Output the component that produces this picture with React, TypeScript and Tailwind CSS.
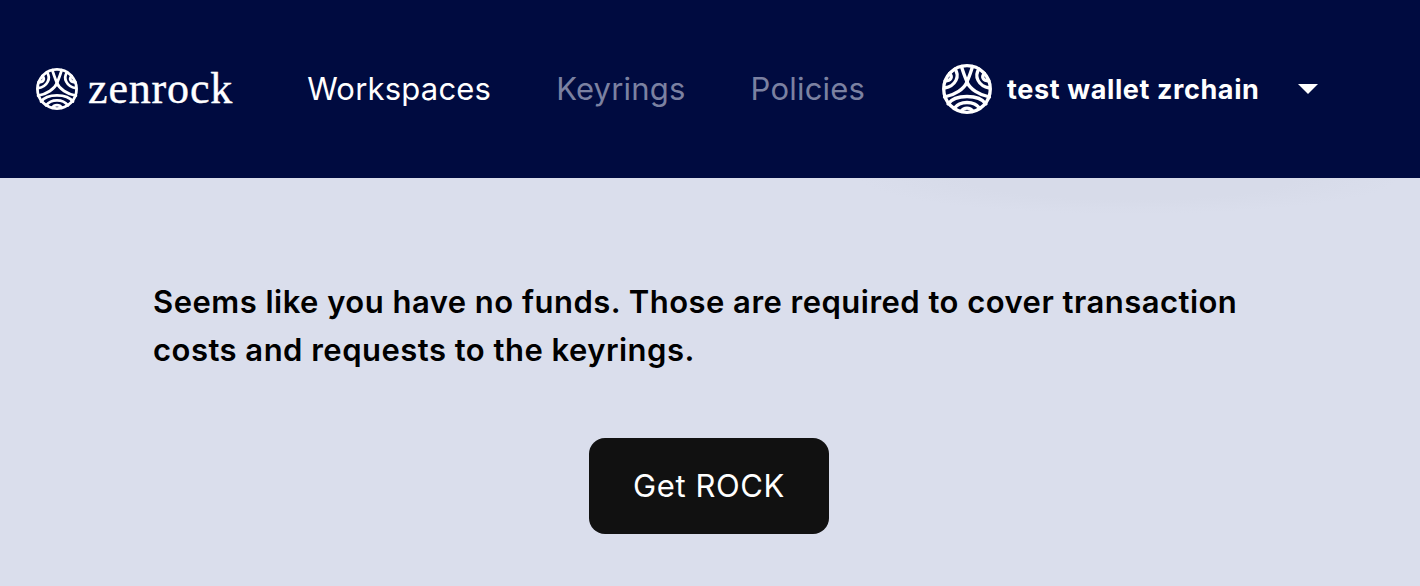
import React from "react";

const LogoMark = ({ className }: { className: string }) => (
  <svg viewBox="0 0 50 50" className={className} fill="none">
    <g stroke="#fff" strokeWidth="3.3" strokeLinecap="round">
      <circle cx="25" cy="25" r="23.300" />
      <path d="M19.500 2.500 C21 8 23 13 25 18 C27 13 29 8 30.500 2.500" />
      <path d="M25 18 C22 25 13 31 2.500 33" />
      <path d="M25 18 C28 25 37 31 47.500 33" />
      <path d="M13 5 C18 12 14 22 2.500 24" />
      <path d="M7.500 9.500 C11 13 9 17 3 17" />
      <path d="M37 5 C32 12 36 22 47.500 24" />
      <path d="M42.500 9.500 C39 13 41 17 47 17" />
      <path d="M6 40 C13 30 37 30 44 40" />
      <path d="M12 44.500 C18 36.500 32 36.500 38 44.500" />
      <path d="M19 47.500 C22 43 28 43 31 47.500" />
    </g>
  </svg>
);

export default function App() {
  return (
    <div className="min-h-[586px] bg-[#dadeec] font-['Inter',sans-serif]">
      <header className="flex h-[178px] items-center bg-[#000b40] pl-[36px]">
        <LogoMark className="h-[42px] w-[42px]" />
        <span className="ml-[10px] font-['Liberation_Serif',serif] text-[44px] leading-none tracking-[0.85px] text-white [-webkit-text-stroke:0.4px_white]">
          zenrock
        </span>
        <nav className="ml-[74px] flex gap-[65px] pb-[2px] text-[31px] leading-none tracking-[0.2px]">
          <span className="text-white">Workspaces</span>
          <span className="text-[#7b81a1]">Keyrings</span>
          <span className="text-[#7b81a1]">Policies</span>
        </nav>
        <div className="ml-[77px] flex items-center">
          <LogoMark className="h-[50px] w-[50px]" />
          <span className="ml-[15px] text-[27px] font-bold leading-none tracking-[0.6px] text-white">
            test wallet zrchain
          </span>
          <span className="ml-[39px] h-0 w-0 border-x-[10px] border-t-[10px] border-x-transparent border-t-white" />
        </div>
      </header>
      <main className="bg-[radial-gradient(ellipse_270px_36px_at_1130px_0px,#d7dbe9_60%,#dadeec_100%)] px-[153px] pt-[100px]">
        <p className="w-[1100px] text-[31px] font-semibold leading-[48px] tracking-[0.48px] text-black">
          Seems like you have no funds. Those are required to cover transaction costs and requests to the keyrings.
        </p>
        <div className="mt-[64px] flex pl-[436px]">
          <button className="h-[96px] w-[240px] rounded-[16px] bg-[#111111] text-[31px] tracking-[0.6px] text-white">
            Get ROCK
          </button>
        </div>
      </main>
    </div>
  );
}
